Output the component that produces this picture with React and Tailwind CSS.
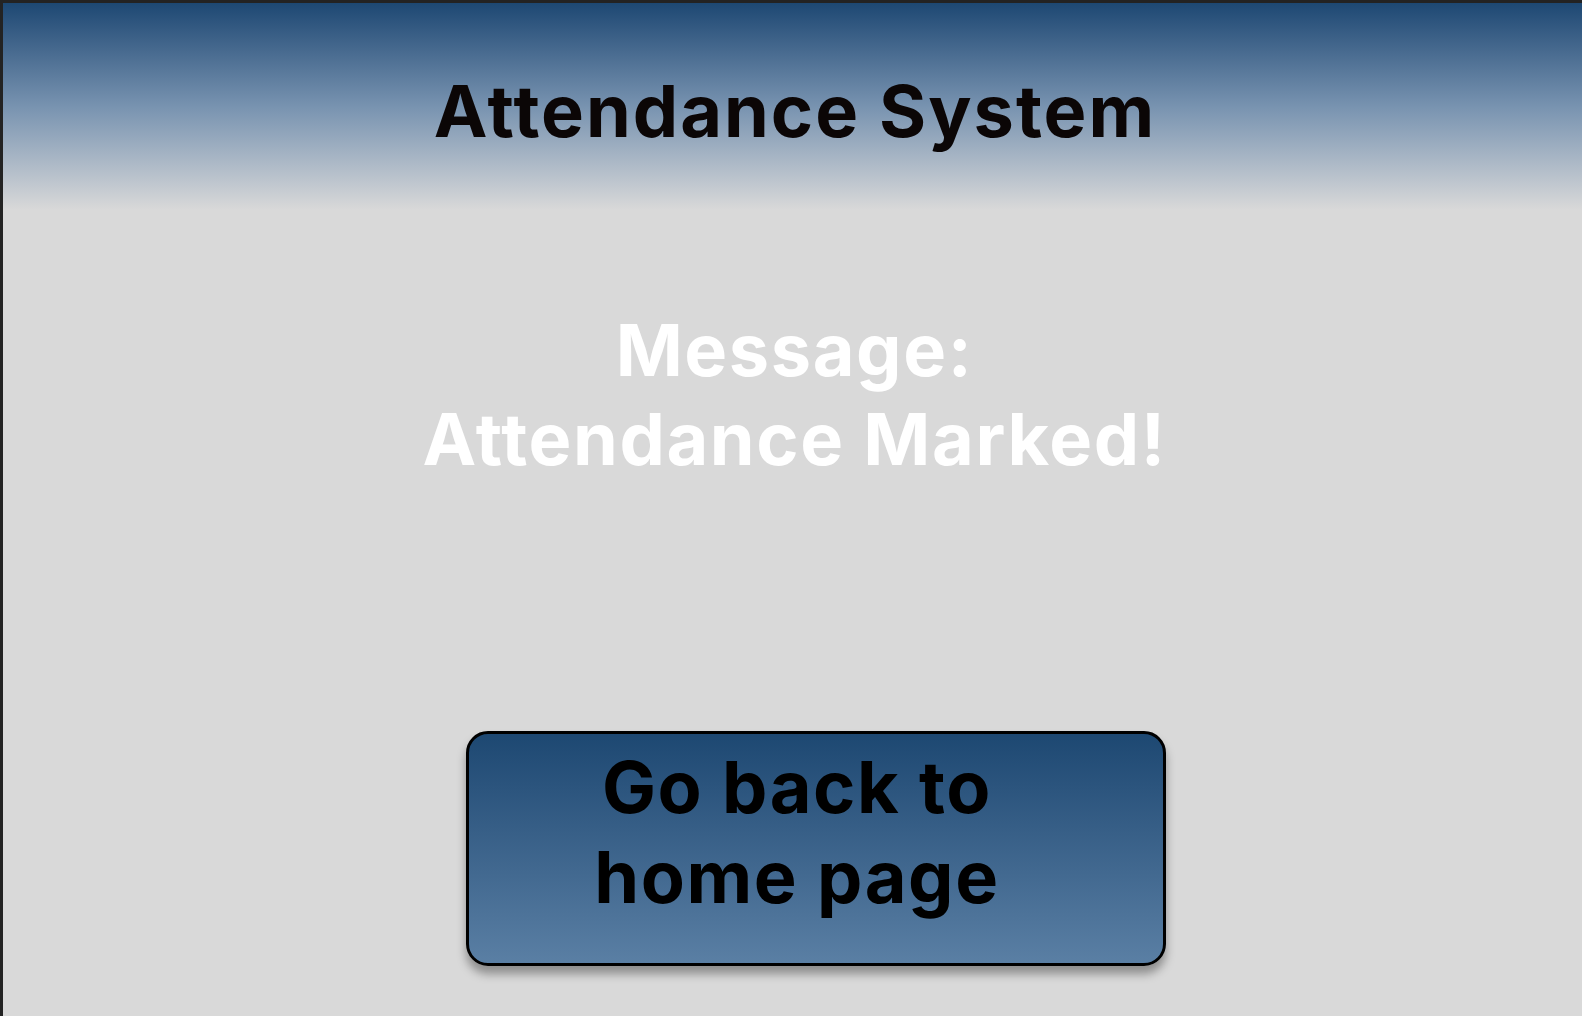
export default function App() {
  return (
    <div
      className="w-full h-[1016px] overflow-hidden flex flex-col bg-[#d9d9d9] border-t-[3px] border-l-[3px] border-[#232323] [font-variant-ligatures:none]"
      style={{ fontFamily: "Inter, 'Noto Sans', sans-serif" }}
    >
      <header className="h-[207px] shrink-0 bg-linear-to-b from-[#1d4873] via-[#7893b0] to-[#d9d9d9] pt-[63px] pl-[5px]">
        <h1 className="text-center text-[72px] leading-[90px] font-bold tracking-[2px] text-[#0b0606]">
          Attendance System
        </h1>
      </header>

      <main className="flex flex-col items-center pt-[95px]">
        <p className="pl-[4px] text-center text-[72px] leading-[89px] font-bold tracking-[1.6px] text-white">
          Message:
          <br />
          Attendance Marked!
        </p>

        <button className="mt-[248px] ml-[46px] w-[700px] h-[235px] rounded-[22px] border-[3px] border-black bg-linear-to-b from-[#1d4872] to-[#5a7fa4] shadow-[0_8px_10px_rgba(0,0,0,0.35)] pt-[8px] pr-[37px] flex justify-center items-start cursor-pointer">
          <span className="text-center text-[72px] leading-[90px] font-bold tracking-[1.6px] text-black">
            Go back to
            <br />
            home page
          </span>
        </button>
      </main>
    </div>
  );
}
